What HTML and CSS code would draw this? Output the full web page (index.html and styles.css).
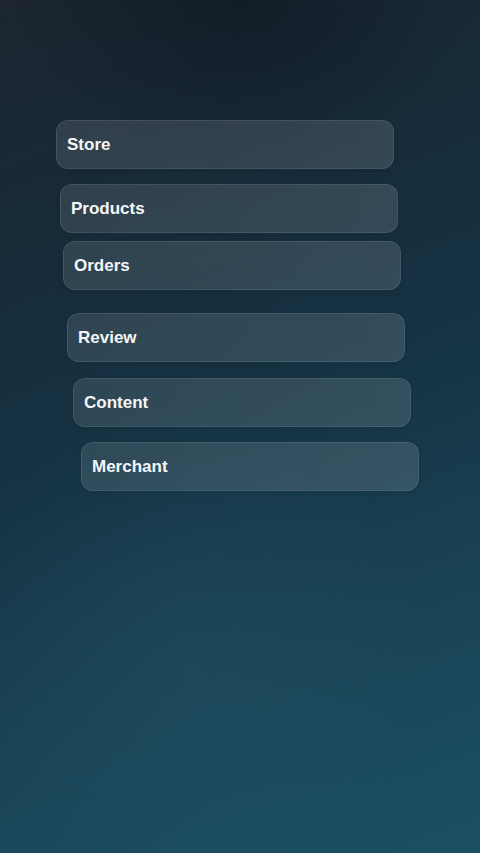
FILE: index.html
```html
<!DOCTYPE html>
<html lang="en">
<head>
<meta charset="utf-8">
<title>Menu</title>
<link rel="stylesheet" href="styles.css">
</head>
<body>
<main class="screen">
  <nav class="menu">
    <div class="item item-store">Store</div>
    <div class="item item-products">Products</div>
    <div class="item item-orders">Orders</div>
    <div class="item item-review">Review</div>
    <div class="item item-content">Content</div>
    <div class="item item-merchant">Merchant</div>
  </nav>
</main>
</body>
</html>
```
FILE: styles.css
```css
html, body {
  margin: 0;
  padding: 0;
  width: 480px;
  height: 853px;
  overflow: hidden;
}
body {
  font-family: "Liberation Sans", Arial, sans-serif;
  background:
    radial-gradient(ellipse 70% 45% at 40% 78%, rgba(40, 90, 110, 0.25), rgba(40, 90, 110, 0) 70%),
    radial-gradient(ellipse 60% 25% at 50% 0%, rgba(12, 20, 30, 0.55), rgba(12, 20, 30, 0) 80%),
    linear-gradient(160deg, #1c2530 0%, #172b39 25%, #153445 50%, #1a4456 75%, #1b5064 100%);
}
.screen {
  width: 480px;
  height: 853px;
  box-sizing: border-box;
  padding-top: 120px;
}
.menu {
  display: flex;
  flex-direction: column;
}
.item {
  box-sizing: border-box;
  width: 338px;
  height: 49px;
  padding: 1px 0 0 10px;
  display: flex;
  align-items: center;
  border-radius: 12px;
  background: linear-gradient(90deg, rgba(255, 255, 255, 0.11), rgba(255, 255, 255, 0.13));
  border: 1px solid rgba(255, 255, 255, 0.09);
  color: #f4f6f8;
  font-size: 17px;
  font-weight: bold;
  box-shadow: 0 2px 6px rgba(0, 0, 0, 0.08);
}
.item-store { margin-left: 56px; }
.item-products { margin-left: 60px; margin-top: 15px; }
.item-orders { margin-left: 63px; margin-top: 8px; }
.item-review { margin-left: 67px; margin-top: 23px; }
.item-content { margin-left: 73px; margin-top: 16px; }
.item-merchant { margin-left: 81px; margin-top: 15px; }
```
